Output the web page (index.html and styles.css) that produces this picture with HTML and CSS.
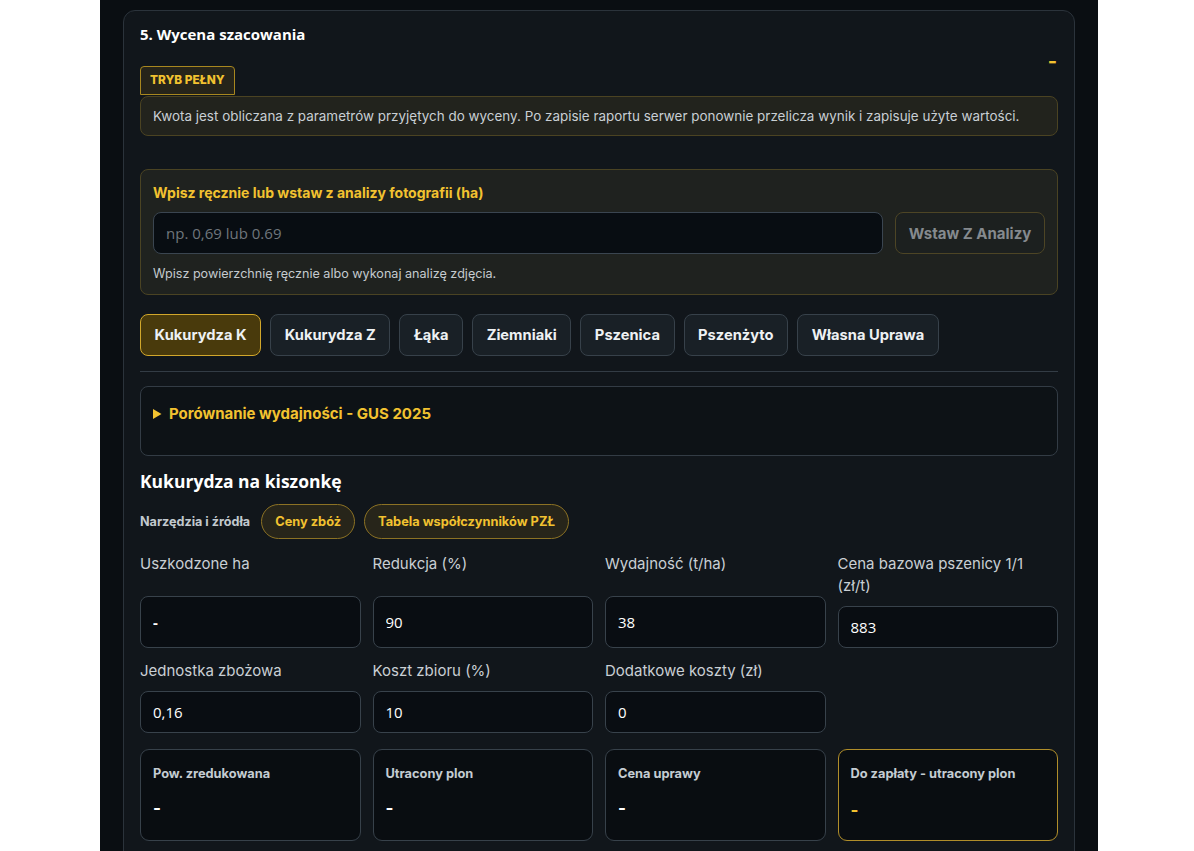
FILE: index.html
```html
<!DOCTYPE html>
<html lang="pl">
<head>
	<meta charset="UTF-8">
	<title>Wycena szacowania</title>
	<link rel="stylesheet" href="styles.css">
</head>
<body>
	<div class="page">
		<section class="card">
			<div class="card-head">
				<div class="head-left">
					<h2 class="card-title">5. Wycena szacowania</h2>
					<span class="badge">TRYB PEŁNY</span>
				</div>
				<div class="head-amount">-</div>
			</div>
			<div class="note">Kwota jest obliczana z parametrów przyjętych do wyceny. Po zapisie raportu serwer ponownie przelicza wynik i zapisuje użyte wartości.</div>

			<div class="area-box">
				<div class="area-label">Wpisz ręcznie lub wstaw z analizy fotografii (ha)</div>
				<div class="area-row">
					<input class="area-input" type="text" placeholder="np. 0,69 lub 0.69">
					<button class="area-btn" disabled>Wstaw Z Analizy</button>
				</div>
				<div class="area-hint">Wpisz powierzchnię ręcznie albo wykonaj analizę zdjęcia.</div>
			</div>

			<div class="tabs">
				<button class="tab active">Kukurydza K</button>
				<button class="tab">Kukurydza Z</button>
				<button class="tab">Łąka</button>
				<button class="tab">Ziemniaki</button>
				<button class="tab">Pszenica</button>
				<button class="tab">Pszenżyto</button>
				<button class="tab">Własna Uprawa</button>
			</div>
			<hr class="divider">

			<details class="compare">
				<summary>Porównanie wydajności - GUS 2025</summary>
			</details>

			<h3 class="crop-title">Kukurydza na kiszonkę</h3>
			<div class="tools">
				<span class="tools-label">Narzędzia i źródła</span>
				<a class="pill" href="javascript:;">Ceny zbóż</a>
				<a class="pill" href="javascript:;">Tabela współczynników PZŁ</a>
			</div>

			<div class="fields">
				<label class="field">
					<span class="field-label">Uszkodzone ha</span>
					<input class="field-input tall bold" type="text" value="-">
				</label>
				<label class="field">
					<span class="field-label">Redukcja (%)</span>
					<input class="field-input tall" type="text" value="90">
				</label>
				<label class="field">
					<span class="field-label">Wydajność (t/ha)</span>
					<input class="field-input tall" type="text" value="38">
				</label>
				<label class="field">
					<span class="field-label">Cena bazowa pszenicy 1/1 (zł/t)</span>
					<input class="field-input" type="text" value="883">
				</label>
				<label class="field">
					<span class="field-label">Jednostka zbożowa</span>
					<input class="field-input" type="text" value="0,16">
				</label>
				<label class="field">
					<span class="field-label">Koszt zbioru (%)</span>
					<input class="field-input" type="text" value="10">
				</label>
				<label class="field">
					<span class="field-label">Dodatkowe koszty (zł)</span>
					<input class="field-input" type="text" value="0">
				</label>
			</div>

			<div class="results">
				<div class="result">
					<div class="result-label">Pow. zredukowana</div>
					<div class="result-value">-</div>
				</div>
				<div class="result">
					<div class="result-label">Utracony plon</div>
					<div class="result-value">-</div>
				</div>
				<div class="result">
					<div class="result-label">Cena uprawy</div>
					<div class="result-value">-</div>
				</div>
				<div class="result total">
					<div class="result-label">Do zapłaty - utracony plon</div>
					<div class="result-value">-</div>
				</div>
			</div>
		</section>
	</div>
</body>
</html>
```

FILE: styles.css
```css
*{margin: 0;padding: 0;box-sizing: border-box}
body{
	background: #fff;
	font-family: "Inter", "Liberation Sans", sans-serif;
	color: #e6e9ec;
}
.page{
	width: 998px;
	min-height: 851px;
	margin-left: 100px;
	padding: 10px 23px 0;
	background: #0a0e12;
}
.card{
	background: #11161b;
	border: 1px solid #2b333b;
	border-radius: 12px;
	padding: 13px 16px 24px;
}
.card-head{
	display: flex;
	align-items: center;
	justify-content: space-between;
}
.head-left{
	display: flex;
	flex-direction: column;
	align-items: flex-start;
	gap: 22px;
}
.card-title{
	font: 700 15px/20px "Open Sans", "Liberation Sans", sans-serif;
	color: #fff;
}
.head-amount{
	font: 700 20px/20px "Inter", sans-serif;
	color: #f2c230;
	padding-right: 1px;
	padding-top: 2px;
}
.badge{
	display: inline-block;
	height: 29px;
	padding: 0 9px;
	font: 800 11.8px/27px "Inter", sans-serif;
	color: #f2c230;
	background: #26241a;
	border: 1px solid #a8871f;
	border-radius: 4px 4px 0 0;
}
.note{
	margin-top: 1px;
	padding: 0 12px;
	height: 40px;
	line-height: 38px;
	font-size: 13.45px;
	color: #c9cfd4;
	background: #22231d;
	border: 1px solid #4b4322;
	border-radius: 8px;
}
.area-box{
	margin-top: 33px;
	padding: 13px 12px 11px;
	background: #1f221f;
	border: 1px solid #4a4323;
	border-radius: 8px;
}
.area-label{
	font-size: 14px;
	font-weight: 700;
	line-height: 20px;
	color: #f2c230;
}
.area-row{
	display: flex;
	gap: 12px;
	margin-top: 9px;
}
.area-input{
	flex: 1;
	height: 42px;
	padding: 0 12px;
	font: 400 15px "Open Sans", sans-serif;
	color: #fff;
	background: #080d12;
	border: 1px solid #3a4550;
	border-radius: 8px;
	outline: none;
}
.area-input::placeholder{
	color: #6f767c;
}
.area-btn{
	width: 150px;
	height: 42px;
	font: 700 15px "Inter", sans-serif;
	color: #858a8e;
	background: #1c201f;
	border: 1px solid #4d4525;
	border-radius: 8px;
}
.area-hint{
	margin-top: 11px;
	font-size: 12.6px;
	line-height: 18px;
	color: #c4cace;
}
.tabs{
	display: flex;
	gap: 9px;
	margin-top: 19px;
}
.tab{
	height: 42px;
	padding: 0 13.6px;
	font: 700 14.7px "Inter", sans-serif;
	color: #eef1f3;
	background: #192026;
	border: 1px solid #37414a;
	border-radius: 8px;
}
.tab.active{
	background: #493a0c;
	border-color: #d1a72b;
}
.divider{
	margin-top: 15px;
	border: 0;
	border-top: 1px solid #333c45;
}
.compare{
	margin-top: 14px;
	height: 70px;
	padding: 16px 12px;
	background: #0d1216;
	border: 1px solid #333c45;
	border-radius: 8px;
}
.compare summary{
	font-size: 15px;
	font-weight: 700;
	line-height: 22px;
	color: #f2c230;
	cursor: pointer;
}
.crop-title{
	margin-top: 14px;
	font: 700 17.5px/22px "Open Sans", "Liberation Sans", sans-serif;
	color: #fff;
}
.tools{
	display: flex;
	align-items: center;
	gap: 9px;
	margin-top: 12px;
}
.tools-label{
	font-size: 12.6px;
	font-weight: 700;
	color: #c2c9ce;
	margin-right: 2px;
}
.pill{
	display: block;
	height: 35px;
	padding: 0 13px;
	font: 700 12.8px/33px "Inter", sans-serif;
	color: #f2c230;
	text-decoration: none;
	background: #27251a;
	border: 1px solid #8c7224;
	border-radius: 18px;
}
.fields{
	display: grid;
	grid-template-columns: repeat(4, 1fr);
	column-gap: 12px;
	row-gap: 12px;
	margin-top: 14px;
}
.field{
	display: flex;
	flex-direction: column;
	justify-content: space-between;
	gap: 9px;
}
.field-label{
	font-size: 15px;
	line-height: 22px;
	color: #c9cfd4;
}
.field-input{
	width: 100%;
	height: 42px;
	padding: 0 12px;
	font: 400 15px "Open Sans", sans-serif;
	color: #fff;
	background: #090d12;
	border: 1px solid #38424b;
	border-radius: 8px;
	outline: none;
}
.field-input.tall{
	height: 52px;
}
.field-input.bold{
	font-weight: 700;
}
.results{
	display: grid;
	grid-template-columns: repeat(4, 1fr);
	gap: 12px;
	margin-top: 16px;
}
.result{
	height: 92px;
	padding: 15px 12px;
	background: #090d11;
	border: 1px solid #37414a;
	border-radius: 9px;
}
.result.total{
	border-color: #b08e2a;
}
.result-label{
	font-size: 12.8px;
	font-weight: 700;
	line-height: 18px;
	color: #c4ccd2;
}
.result-value{
	margin-top: 14px;
	font-size: 17px;
	font-weight: 700;
	line-height: 22px;
	color: #fff;
}
.result.total .result-value{
	color: #f2c230;
	margin-top: 16px;
}
```
